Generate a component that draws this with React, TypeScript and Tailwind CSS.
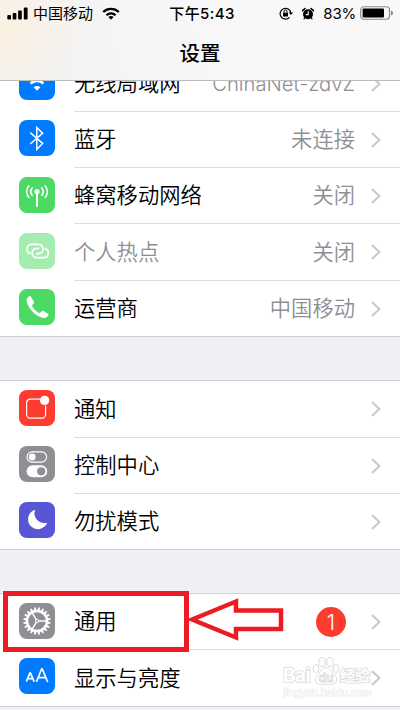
import React from 'react';

type IconName =
  | 'wifi'
  | 'bluetooth'
  | 'cellular'
  | 'hotspot'
  | 'phone'
  | 'notification'
  | 'control'
  | 'moon'
  | 'gear'
  | 'display';

interface RowItem {
  icon: IconName;
  label: string;
  value?: string;
  badge?: number;
  disabled?: boolean;
}

const networkRows: RowItem[] = [
  { icon: 'wifi', label: '无线局域网', value: 'ChinaNet-zdvZ' },
  { icon: 'bluetooth', label: '蓝牙', value: '未连接' },
  { icon: 'cellular', label: '蜂窝移动网络', value: '关闭' },
  { icon: 'hotspot', label: '个人热点', value: '关闭', disabled: true },
  { icon: 'phone', label: '运营商', value: '中国移动' },
];

const noticeRows: RowItem[] = [
  { icon: 'notification', label: '通知' },
  { icon: 'control', label: '控制中心' },
  { icon: 'moon', label: '勿扰模式' },
];

const generalRows: RowItem[] = [
  { icon: 'gear', label: '通用', badge: 1 },
  { icon: 'display', label: '显示与亮度' },
];

const iconColors: Record<IconName, string> = {
  wifi: 'bg-[#007aff]',
  bluetooth: 'bg-[#007aff]',
  cellular: 'bg-[#4cd964]',
  hotspot: 'bg-[#a5ecb1]',
  phone: 'bg-[#4cd964]',
  notification: 'bg-[#ff3b30]',
  control: 'bg-[#8e8e93]',
  moon: 'bg-[#5856d6]',
  gear: 'bg-[#8e8e93]',
  display: 'bg-[#007aff]',
};

const teeth = Array.from({ length: 20 }, (_, i) => i * 18);

const glyphs: Record<IconName, React.ReactNode> = {
  wifi: (
    <g fill="none" stroke="#fff" strokeWidth="2.8">
      <path d="M7.4 15.3a15 15 0 0 1 21.2 0" />
      <path d="M11.6 19.6a9 9 0 0 1 12.8 0" />
      <path d="M18 26.8l-3.4-3.5a4.9 4.9 0 0 1 6.8 0z" fill="#fff" stroke="none" />
    </g>
  ),
  bluetooth: (
    <path
      d="M11.2 12.6l12.4 10.8-5.8 6V7.6l5.8 5.6-12.4 10.8"
      fill="none"
      stroke="#fff"
      strokeWidth="1.5"
    />
  ),
  cellular: (
    <g fill="none" stroke="#fff" strokeWidth="1.7" strokeLinecap="round">
      <circle cx="18" cy="14.6" r="2.6" fill="#fff" stroke="none" />
      <path d="M18 15v14" strokeWidth="1.9" />
      <path d="M13.2 11a5.6 5.6 0 0 0 0 7.2M22.8 11a5.6 5.6 0 0 1 0 7.2" />
      <path d="M9.8 8.8a9.4 9.4 0 0 0 0 11.6M26.2 8.8a9.4 9.4 0 0 1 0 11.6" />
    </g>
  ),
  hotspot: (
    <g fill="none" stroke="#fff" strokeWidth="1.7" strokeLinecap="round">
      <path d="M11 20.4A4.7 4.7 0 0 1 12.7 11.3H19.3A4.7 4.7 0 0 1 19.3 20.7H17.8" />
      <path d="M26.2 15.6A4.7 4.7 0 0 1 24.5 24.7H17.9A4.7 4.7 0 0 1 17.9 15.3H19.4" />
    </g>
  ),
  phone: (
    <path
      d="M10.5 7.2C8.7 8 7.3 9.3 7.6 11.6c.5 4 3 8 6.2 11.3 3.2 3.2 7.1 5.5 10.8 6 2.5.3 4-1 4.8-2.6.3-.6.2-1-.3-1.4l-4.5-3c-.5-.3-1-.3-1.4.1l-2.2 1.8c-.4.3-.8.3-1.3 0-2.7-1.6-4.9-3.9-6.5-6.5-.3-.5-.2-.9.1-1.2l1.5-1.9c.4-.5.4-.9.1-1.4l-3.1-5.3c-.3-.4-.8-.6-1.3-.3z"
      fill="#fff"
    />
  ),
  notification: (
    <>
      <path
        d="M21 9.2h-9.8a3.6 3.6 0 0 0-3.6 3.6v11.8a3.6 3.6 0 0 0 3.6 3.6H23a3.6 3.6 0 0 0 3.6-3.6V15.8"
        fill="none"
        stroke="#fff"
        strokeWidth="1.2"
      />
      <circle cx="25.6" cy="10.4" r="4.7" fill="#fff" />
    </>
  ),
  control: (
    <>
      <rect x="8" y="5.8" width="19.6" height="10.4" rx="5.2" fill="none" stroke="#fff" strokeWidth="1.2" />
      <circle cx="13.2" cy="11" r="3.4" fill="#fff" />
      <rect x="7.6" y="19.3" width="20.6" height="12" rx="6" fill="#fff" />
      <circle cx="22.2" cy="25.3" r="4.1" fill="#8e8e93" />
    </>
  ),
  moon: <path d="M16.2 7.8A9.9 9.9 0 1 0 28.2 20.8A9.9 9.9 0 0 1 16.2 7.8z" fill="#fff" />,
  gear: (
    <g fill="none" stroke="#fff">
      <circle cx="18" cy="18" r="10" strokeWidth="2.4" />
      {teeth.map((angle) => (
        <path key={angle} d="M16.7 7.6L17.3 4.2H18.7L19.3 7.6z" fill="#fff" stroke="none" transform={`rotate(${angle + 9} 18 18)`} />
      ))}
      <path d="M19.5 18H28M17.25 16.7L13 9.3M17.25 19.3L13 26.7" strokeWidth="1.5" />
      <circle cx="18" cy="18" r="1.5" strokeWidth="1.1" />
    </g>
  ),
  display: (
    <g fill="none" stroke="#fff" strokeWidth="1.7" strokeLinejoin="round">
      <path d="M7.3 23.6l3.7-8.8h.4l3.7 8.8M8.7 20.6h5" />
      <path d="M17.4 24l5.3-13.2h.5L28.7 24M19.3 19.6h7.5" />
    </g>
  ),
};

const SettingIcon: React.FC<{ name: IconName }> = ({ name }) => (
  <div className={`h-9 w-9 shrink-0 overflow-hidden rounded-lg ${iconColors[name]}`}>
    <svg viewBox="0 0 36 36" className="h-9 w-9">
      {glyphs[name]}
    </svg>
  </div>
);

const Chevron: React.FC = () => (
  <svg viewBox="0 0 12 16" className="h-4 w-3 shrink-0" fill="none" stroke="#c7c7cc" strokeWidth="2">
    <path d="M2 1l7.4 7L2 15" />
  </svg>
);

const SettingRow: React.FC<{ item: RowItem; last: boolean }> = ({ item, last }) => (
  <div className={`flex items-stretch pl-[19px] ${last ? 'h-[55.25px]' : 'h-[56.25px]'}`}>
    <div className="flex items-center pb-[3px]">
      <SettingIcon name={item.icon} />
    </div>
    <div
      className={`ml-[19px] flex flex-1 items-center whitespace-nowrap pr-[18px] pt-px text-[21.3px] leading-none ${
        last ? '' : 'border-b border-[#dcdcde]'
      }`}
    >
      <span className={`flex-1 ${item.disabled ? 'text-[#8e8e93]' : 'text-black'}`}>{item.label}</span>
      {item.value && (
        <span className={`mr-[15px] text-[#8e8e93] ${item.icon === 'wifi' ? 'text-[20.2px]' : ''}`}>{item.value}</span>
      )}
      {item.badge && (
        <span className="mr-[24px] flex h-[30px] w-[30px] items-center justify-center rounded-full bg-[#ff3b30] text-[21px] text-white">
          {item.badge}
        </span>
      )}
      <Chevron />
    </div>
  </div>
);

const SettingGroup: React.FC<{ items: RowItem[]; className?: string }> = ({ items, className = '' }) => (
  <section className={`bg-white ${className}`}>
    {items.map((item, i) => (
      <SettingRow key={item.label} item={item} last={i === items.length - 1} />
    ))}
  </section>
);

const StatusBar: React.FC = () => (
  <div className="grid h-[26px] grid-cols-[1fr_auto_1fr] items-center px-[7px] text-[15px] leading-none text-black">
    <div className="flex items-center">
      <svg viewBox="0 0 21 13" className="h-[13px] w-[21px]">
        <rect x="0.3" y="8" width="3.7" height="4.6" rx="1" />
        <rect x="5.7" y="6" width="3.7" height="6.6" rx="1" />
        <rect x="11.1" y="3.4" width="3.7" height="9.2" rx="1" />
        <rect x="16.8" y="0.6" width="3.8" height="12" rx="1" />
      </svg>
      <span className="ml-[5px]">中国移动</span>
      <svg viewBox="0 0 18 13" className="ml-[9px] h-[13px] w-[18px]" fill="none" stroke="#000" strokeWidth="2.3">
        <path d="M1.2 5a11.2 11.2 0 0 1 15.6 0" />
        <path d="M4.4 8.3a6.6 6.6 0 0 1 9.2 0" />
        <path d="M9 12.7l-2.6-2.6a3.8 3.8 0 0 1 5.2 0z" fill="#000" stroke="none" />
      </svg>
    </div>
    <span className="pl-[4px] font-medium tracking-[0.4px]">下午5:43</span>
    <div className="flex items-center justify-end">
      <svg viewBox="0 0 14 13" className="h-[13px] w-[14px]" fill="none" stroke="#000" strokeWidth="1.2">
        <path d="M10.6 10.3A5.4 5.4 0 1 1 11.9 6" />
        <path d="M9.7 5.4h4.3L11.9 8z" fill="#000" stroke="none" />
        <rect x="4" y="5.7" width="5" height="3.7" rx="0.5" fill="#000" stroke="none" />
        <path d="M5 6V4.6a1.5 1.5 0 0 1 3 0V6" strokeWidth="1" />
      </svg>
      <svg viewBox="0 0 14 13" className="ml-[8px] h-[13px] w-[14px]">
        <circle cx="7" cy="7.2" r="5" />
        <path d="M1.6 3.6L4 1.5M12.4 3.6L10 1.5" stroke="#000" strokeWidth="1.6" strokeLinecap="round" />
        <path d="M3.8 10.8l-.8 1M10.2 10.8l.8 1" stroke="#000" strokeWidth="1.2" strokeLinecap="round" />
        <path d="M7.2 4.3V7.6H4.8" fill="none" stroke="#fff" strokeWidth="1.1" />
      </svg>
      <span className="ml-[8px] pt-px text-[15px] tracking-[-0.2px]">83%</span>
      <svg viewBox="0 0 34 14" className="-mr-px ml-[4px] h-[14px] w-[34px]">
        <rect x="0.7" y="0.7" width="28.8" height="12.6" rx="3" fill="none" stroke="#88888a" strokeWidth="1.1" />
        <rect x="2.6" y="2.6" width="21.4" height="8.8" rx="1" />
        <path d="M31 4.5c1.6.6 2 1.6 2 2.5s-.4 1.9-2 2.5z" fill="#88888a" />
      </svg>
    </div>
  </div>
);

const Watermark: React.FC = () => (
  <div className="absolute left-[283px] top-[655px] text-white">
    <div className="flex h-[31px] items-end">
      <span className="w-[29px] text-[19px] font-bold leading-[20px] tracking-[-0.5px] [-webkit-text-stroke:1.6px_#dcdcdc] [paint-order:stroke_fill]">
        Bai
      </span>
      <svg viewBox="0 0 28 30" className="h-[30px] w-[28px]" fill="#fff" stroke="#dcdcdc" strokeWidth="1">
        <ellipse cx="4" cy="12.5" rx="3" ry="4" />
        <ellipse cx="10" cy="6" rx="3.2" ry="4.6" />
        <ellipse cx="18" cy="6" rx="3.2" ry="4.6" />
        <ellipse cx="24" cy="12.5" rx="3" ry="4" />
        <path d="M14 11.5c4 0 5.5 5 8.5 7.5 4 3.5 2 9.5-3 9.5-2.5 0-3.5-.4-5.5-.4s-3 .4-5.5.4c-5 0-7-6-3-9.5 3-2.5 4.5-7.5 8.5-7.5z" />
        <text x="14" y="25.5" textAnchor="middle" fontSize="12" fontWeight="600" strokeWidth="0.9">
          du
        </text>
      </svg>
      <span className="text-[15px] font-bold leading-[20px] [-webkit-text-stroke:1.6px_#dcdcdc] [paint-order:stroke_fill]">经验</span>
    </div>
    <div className="text-[10px] leading-[13px] tracking-[0.2px] [-webkit-text-stroke:1px_#e8e8e8] [paint-order:stroke_fill]">
      jingyan.baidu.com
    </div>
  </div>
);

export default function App() {
  return (
    <div className="relative flex h-[710px] w-[400px] flex-col overflow-hidden bg-[#efeff4] font-['Inter','Noto_Sans_CJK_SC',sans-serif] font-[350]">
      <header className="z-10 h-[81px] shrink-0 border-b border-[#bcbcbe] bg-[#f8f8f8] bg-[radial-gradient(circle_at_0_28px,#faf0e1_0,#f9f1e6_25px,transparent_95px),linear-gradient(75deg,#eaf0f5_0,#f3f4f5_20%,#f8f8f8_60%)] font-normal">
        <StatusBar />
        <h1 className="mt-[17px] text-center text-[20.5px] font-medium leading-[22px] text-black">设置</h1>
      </header>

      <main className="-mt-[25.5px]">
        <SettingGroup items={networkRows} className="border-b border-[#d0d0d4]" />
        <SettingGroup items={noticeRows} className="mt-[43.5px] border-y border-[#d0d0d4]" />
        <SettingGroup items={generalRows} className="mt-[43px] border-y border-[#d0d0d4]" />
      </main>

      <Watermark />

      {/* Highlight around the general row */}
      <div className="absolute left-[3px] top-[591px] h-[61px] w-[186px] border-[5px] border-[#ed1c24]" />
      <svg viewBox="0 0 96 44" className="absolute left-[188px] top-[598px] h-[44px] w-[96px]">
        <path d="M4 21.5L48 3.5V12.5H93V31H48V39.5z" fill="#fff" stroke="#ed1c24" strokeWidth="4.5" />
      </svg>
    </div>
  );
}
